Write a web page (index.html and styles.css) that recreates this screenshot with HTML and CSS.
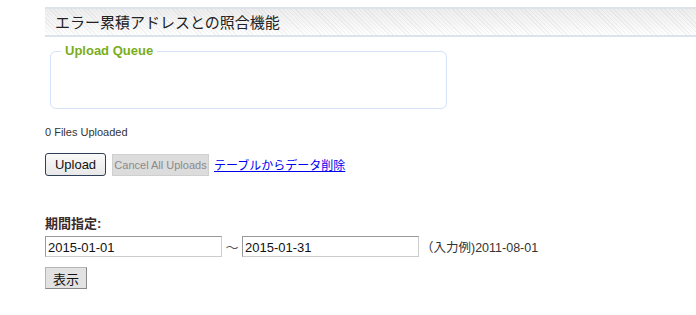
FILE: index.html
```html
<!DOCTYPE html>
<html>
<head>
    <meta charset="UTF-8">
    <title>エラー累積アドレスとの照合機能</title>
    <link rel="stylesheet" href="styles.css">
</head>
<body>
    <div class="page">
        <h2 class="title-bar">エラー累積アドレスとの照合機能</h2>

        <fieldset class="queue">
            <legend>Upload Queue</legend>
        </fieldset>

        <p class="status">0 Files Uploaded</p>

        <div class="upload-row">
            <button class="btn btn-upload">Upload</button>
            <button class="btn btn-cancel" disabled>Cancel All Uploads</button>
            <a href="#" class="link">テーブルからデータ削除</a>
        </div>

        <form class="period">
            <label class="period-label">期間指定:</label>
            <div class="period-row">
                <input type="text" class="date-input" value="2015-01-01">
                <span class="tilde">～</span>
                <input type="text" class="date-input" value="2015-01-31">
                <span class="example">（入力例)2011-08-01</span>
            </div>
            <button type="button" class="btn btn-show">表示</button>
        </form>
    </div>
</body>
</html>
```

FILE: styles.css
```css
* {
    margin: 0;
    padding: 0;
    box-sizing: border-box;
}

body {
    font-family: 'Liberation Sans', 'Noto Sans CJK JP', sans-serif;
    background: #fff;
    color: #333;
    font-size: 13px;
}

.page {
    padding: 7px 0 0 45px;
}

.title-bar {
    height: 30px;
    border-top: 2px solid #dde3ea;
    border-bottom: 2px solid #dde3ea;
    background:
        repeating-linear-gradient(45deg, rgba(0,0,0,0.045) 0 1px, transparent 1px 3px),
        linear-gradient(to bottom, #eeeeee 0%, #f6f6f6 55%, #ffffff 100%);
    font-size: 15px;
    font-weight: normal;
    color: #222;
    padding: 3px 0 0 10px;
    line-height: 22px;
}

.queue {
    width: 397px;
    height: 65px;
    margin: 7px 0 0 5px;
    border: 1px solid #d5e2f7;
    border-radius: 6px;
    padding: 0 10px;
}

.queue legend {
    color: #79ad1c;
    font-weight: bold;
    font-size: 13px;
    padding: 0 4px;
    line-height: 14px;
}

.status {
    font-size: 11px;
    margin-top: 16px;
    line-height: 14px;
}

.upload-row {
    display: flex;
    align-items: center;
    margin-top: 14px;
    gap: 5px;
}

.btn {
    font-family: 'Liberation Sans', 'Noto Sans CJK JP', sans-serif;
    cursor: pointer;
}

.btn-upload {
    width: 61px;
    height: 23px;
    font-size: 13px;
    color: #111;
    background: linear-gradient(to bottom, #fafafa, #e8e8e8);
    border: 1px solid #2f3f55;
    border-radius: 3px;
}

.btn-cancel {
    width: 97px;
    height: 22px;
    font-size: 11px;
    color: #8a8a8a;
    background: #dcdcdc;
    border: 1px solid #cfcfcf;
    margin-left: 1px;
}

.link {
    color: #0000ee;
    font-size: 12px;
    text-decoration: underline;
}

.period {
    margin-top: 40px;
}

.period-label {
    display: block;
    font-weight: bold;
    font-size: 13px;
    color: #3a2a2a;
    line-height: 16px;
    margin-bottom: 4px;
}

.period-row {
    display: flex;
    align-items: center;
}

.date-input {
    width: 177px;
    height: 21px;
    border: 1px solid #ccc;
    border-top-color: #999;
    border-left-color: #999;
    font-family: 'Liberation Sans', 'Noto Sans CJK JP', sans-serif;
    font-size: 13px;
    padding: 1px 2px 0;
    color: #111;
}

.tilde {
    font-size: 13px;
    color: #555;
    width: 20px;
    text-align: center;
}

.example {
    font-size: 12.5px;
    margin-left: 2px;
    color: #333;
}

.btn-show {
    margin-top: 10px;
    width: 42px;
    height: 22px;
    font-size: 13px;
    color: #111;
    background: #e2e2e2;
    border: 1px solid #b5b5b5;
    border-bottom-color: #888;
    border-right-color: #888;
}
```
